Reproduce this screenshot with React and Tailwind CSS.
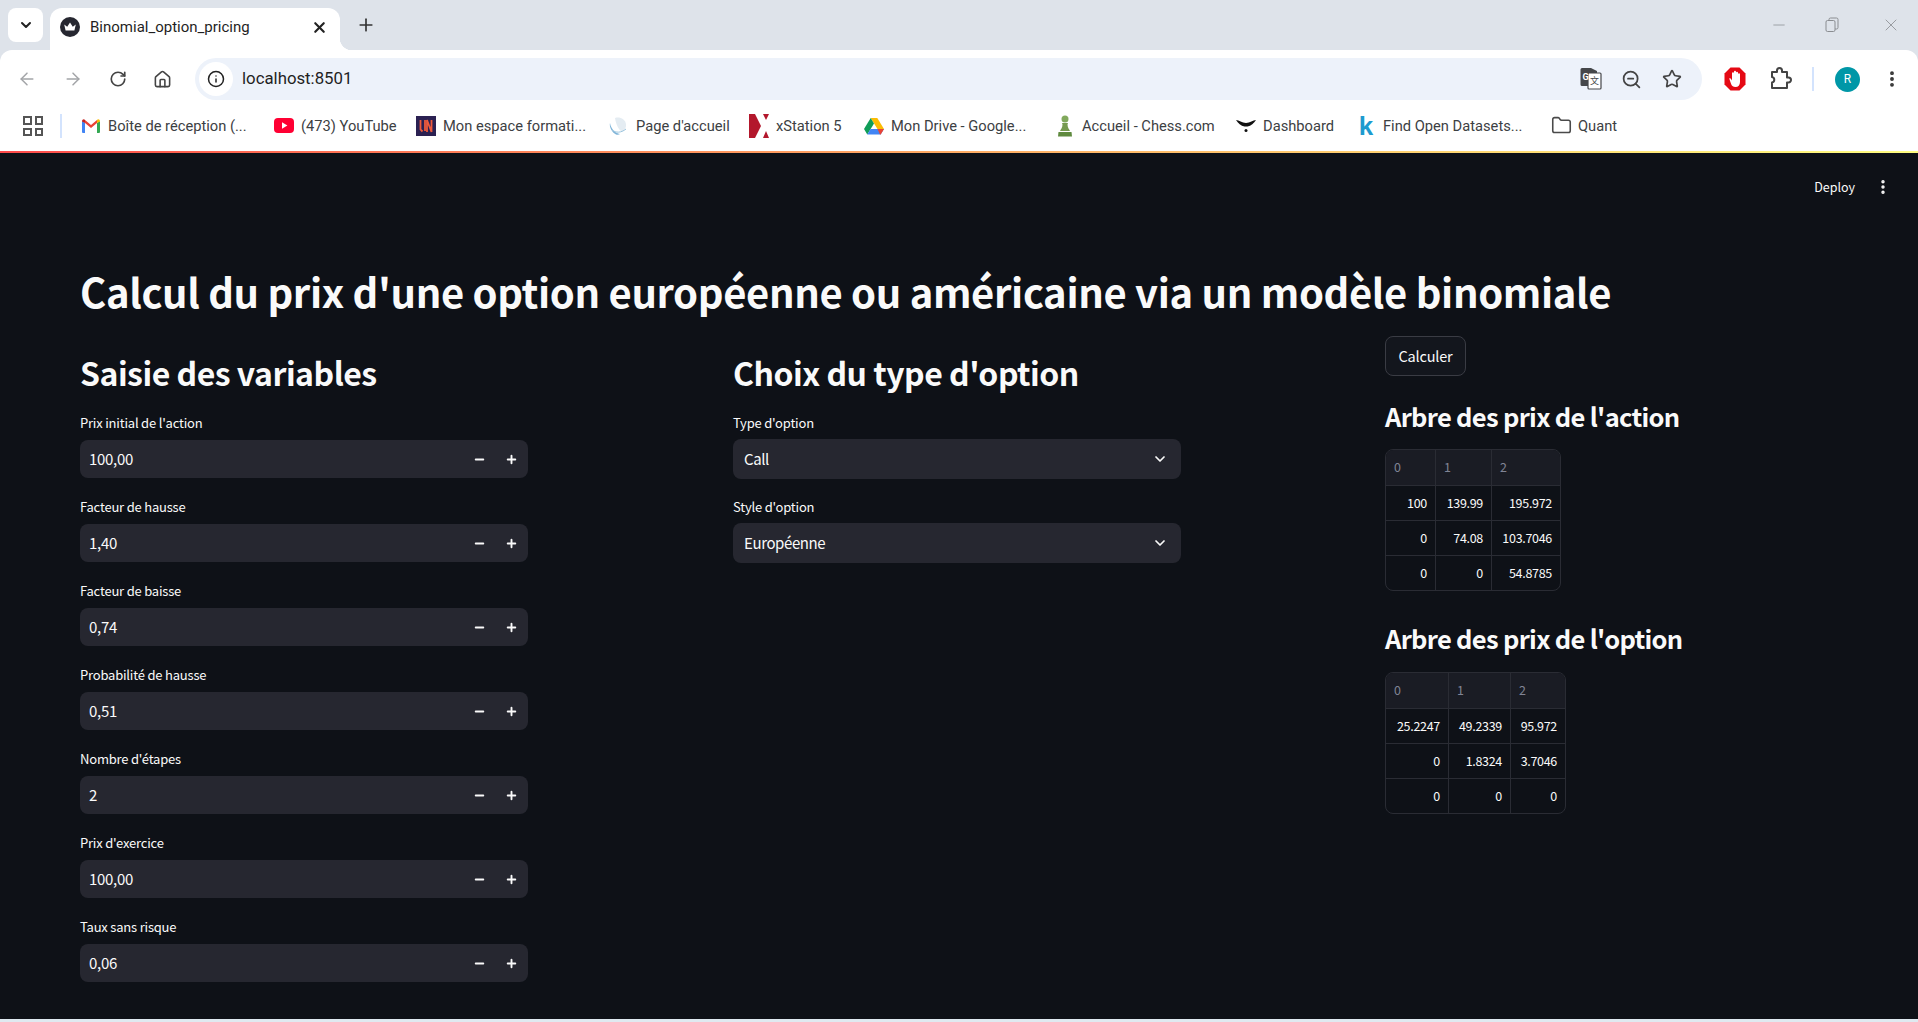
import React from "react";
import { ArrowLeft, ArrowRight, RotateCw, Home, Info, Star, ZoomOut, EllipsisVertical, Folder, ChevronDown, Plus, Minus, X } from "lucide-react";

const ST = "font-['Noto_Sans_CJK_SC','Noto_Sans',sans-serif]";

function Crown() {
  return (
    <svg width="20" height="20" viewBox="0 0 20 20" className="shrink-0">
      <circle cx="10" cy="10" r="10" fill="#262730" />
      <path d="M4.2 7.5 L7.2 9.8 L10 5.6 L12.8 9.8 L15.8 7.5 L14.4 13.6 L5.6 13.6 Z" fill="#fff" />
    </svg>
  );
}
function Gmail() {
  return (
    <svg width="20" height="16" viewBox="0 0 20 16">
      <path d="M1 15V3l3 2v10H2a1 1 0 0 1-1-1z" fill="#4285f4" />
      <path d="M16 15V5l3-2v11a1 1 0 0 1-1 1z" fill="#34a853" />
      <path d="M4 5v-3L10 7l6-5v3l-6 5z" fill="#ea4335" />
      <path d="M1 3.5C1 1.5 3 .7 4 2v3z" fill="#c5221f" />
      <path d="M19 3.5C19 1.5 17 .7 16 2v3z" fill="#fbbc04" />
    </svg>
  );
}
function YouTube() {
  return (
    <svg width="20" height="15" viewBox="0 0 20 15">
      <rect width="20" height="15" rx="4" fill="#ff0033" />
      <path d="M8 4.3 L13.4 7.5 L8 10.7 Z" fill="#fff" />
    </svg>
  );
}
function UN() {
  return (
    <svg width="20" height="20" viewBox="0 0 20 20">
      <rect width="20" height="20" fill="#2b2152" />
      <path d="M4.500 4v9.500l2 2M9 4v11" fill="none" stroke="#ef5a3c" strokeWidth="1.800" />
      <path d="M11 16V4l4.500 12V4" fill="none" stroke="#ef5a3c" strokeWidth="1.800" />
    </svg>
  );
}
function Globe() {
  return (
    <svg width="20" height="20" viewBox="0 0 20 20">
      <path d="M1 7C2 13 6 17 11 18c-1 1-3 1-4 .4C3 16.500 0 11 1 7z" fill="#7fb4d8" />
      <path d="M6 2c5-1.500 10 1 11 6 .5 3-1 6-4 8-3-2-6-7-7-14z" fill="#e4ecf2" />
      <path d="M3 14c4 3 9 3 14-1" fill="none" stroke="#9cc5de" strokeWidth="1" />
    </svg>
  );
}
function XStation() {
  return (
    <svg width="20" height="24" viewBox="0 0 20 24">
      <path d="M0 0 L6 0 L12 12 L6 24 L0 24 Z" fill="#b3172c" />
      <path d="M14 0 L20 0 L17 6 Z M14 24 L20 24 L17 17 Z" fill="#b3172c" />
    </svg>
  );
}
function Drive() {
  return (
    <svg width="20" height="18" viewBox="0 0 20 18">
      <path d="M6.700 1 L13.300 1 L20 12 L13.500 12 Z" fill="#fbbc04" />
      <path d="M6.700 1 L0 12 L3.300 17.500 L10 6.500 Z" fill="#0f9d58" />
      <path d="M6.500 12 L20 12 L16.700 17.500 L3.300 17.500 Z" fill="#4285f4" />
      <path d="M13.500 12 L20 12 L16.700 17.500 L16 17.500 Z" fill="#ea4335" />
    </svg>
  );
}
function Pawn() {
  return (
    <svg width="16" height="22" viewBox="0 0 16 22">
      <circle cx="8" cy="4" r="3.500" fill="#81a95c" />
      <path d="M5 8h6l-.5 1.500c0 3 1.500 4.500 2.500 6.500H3c1-2 2.500-3.500 2.500-6.500z" fill="#769a50" />
      <path d="M1.500 17h13l.5 4.500H1z" fill="#5f8a3e" />
    </svg>
  );
}
function Swoosh() {
  return (
    <svg width="20" height="14" viewBox="0 0 20 14">
      <path d="M0 1c3 0 6 3 10 3s7-3 10-3c-2 3-5 6-8.500 6.500h-3C5 7 2 4 0 1z" fill="#111" />
      <circle cx="10" cy="11.500" r="1.500" fill="#111" />
    </svg>
  );
}
function Translate() {
  return (
    <svg width="22" height="24" viewBox="0 0 22 24">
      <path d="M2 1h9l6 3v15H2a1.500 1.500 0 0 1-1.500-1.500v-15A1.500 1.500 0 0 1 2 1z" fill="#45474a" />
      <rect x="8" y="6" width="13" height="16" rx="1" fill="#fff" stroke="#45474a" strokeWidth="1.200" />
      <text x="2.500" y="13" fontSize="9" fontWeight="700" fill="#fff" fontFamily="Roboto, sans-serif">G</text>
      <text x="10" y="17" fontSize="9" fill="#45474a" fontFamily="'Noto Sans CJK SC', sans-serif">文</text>
    </svg>
  );
}
function Adblock() {
  return (
    <svg width="22" height="24" viewBox="0 0 22 24">
      <polygon points="6.500,0.500 15.500,0.500 21.500,6.500 21.500,17.500 15.500,23.500 6.500,23.500 0.500,17.500 0.500,6.500" fill="#e50914" />
      <path d="M5.200 11.500c.7-.6 1.500-.2 2 .7l.8 1.300V6.200a1 1 0 0 1 2 0V4.700a1 1 0 0 1 2 0v1a1 1 0 0 1 2 0v1.500a1 1 0 0 1 2 0V15c0 3-1.800 5-4.500 5-2.300 0-3.500-1-4.300-2.800z" fill="#fff" />
    </svg>
  );
}
function Extension() {
  return (
    <svg width="22" height="24" viewBox="0 0 22 24" fill="none" stroke="#444" strokeWidth="2" strokeLinejoin="round">
      <path d="M2 5h5V3.500a2.500 2.500 0 0 1 5 0V5h5v5.500h1.500a2.500 2.500 0 0 1 0 5H17V21H2v-5.500a2.800 2.800 0 0 0 0-5.500z" />
    </svg>
  );
}

const bookmarks = [
  { icon: <Gmail />, text: "Boîte de réception (...", cls: "w-[193px]" },
  { icon: <YouTube />, text: "(473) YouTube", cls: "w-[142px]" },
  { icon: <UN />, text: "Mon espace formati...", cls: "w-[193px]" },
  { icon: <Globe />, text: "Page d'accueil", cls: "w-[140px]" },
  { icon: <XStation />, text: "xStation 5", cls: "w-[115px]" },
  { icon: <Drive />, text: "Mon Drive - Google...", cls: "w-[191px]" },
  { icon: <Pawn />, text: "Accueil - Chess.com", cls: "w-[181px]" },
  { icon: <Swoosh />, text: "Dashboard", cls: "w-[120px]" },
  { icon: <span className="font-['Liberation_Sans',sans-serif] text-[26px] leading-none font-bold text-[#1d9bcf]">k</span>, text: "Find Open Datasets...", cls: "w-[195px]" },
  { icon: <Folder size={21} strokeWidth={1.8} className="text-[#4a4a4a]" />, text: "Quant", cls: "w-[80px]" },
];

function Tabs() {
  return (
    <div className="flex h-[50px] shrink-0 bg-[#dee3ea] pt-2">
      <div className="ml-2 flex h-[34px] w-[35px] items-center justify-center rounded-lg bg-white">
        <ChevronDown size={16} strokeWidth={3} className="text-[#222]" />
      </div>
      <div className="relative ml-[7px] flex h-[42px] w-[290px] items-center rounded-t-xl bg-white pl-[10px] pb-[4px]">
        <Crown />
        <span className="ml-[10px] w-[221px] font-['Roboto',sans-serif] text-[15px] text-[#1f1f1f]">Binomial_option_pricing</span>
        <X size={17} strokeWidth={3} className="text-[#222]" />
        <span className="absolute bottom-0 -right-3 h-3 w-3 bg-[radial-gradient(circle_at_100%_0,transparent_12px,white_12.500px)]"></span>
      </div>
      <div className="ml-[16px] flex h-[34px] items-center">
        <Plus size={20} strokeWidth={2} className="text-[#333]" />
      </div>
      <div className="ml-auto flex h-[34px] items-center text-[#8a8d91]">
        <Minus size={18} strokeWidth={1} className="mr-[37px]" />
        <svg width="14" height="16" viewBox="0 0 14 16" className="mr-[42px]" fill="none" stroke="#8a8d91" strokeWidth="1">
          <rect x="1" y="3.500" width="9" height="11" rx="1.500" />
          <path d="M4 3.500V2.500A1.500 1.500 0 0 1 5.500 1h6A1.500 1.500 0 0 1 13 2.500v8a1.500 1.500 0 0 1-1.500 1.500H10" />
        </svg>
        <X size={20} strokeWidth={1} className="mr-[17px]" />
      </div>
    </div>
  );
}

function Toolbar() {
  return (
    <div className="flex h-[58px] shrink-0 items-center">
      <ArrowLeft size={20} strokeWidth={1.8} className="ml-[17px] text-[#a3a5a8]" />
      <ArrowRight size={20} strokeWidth={1.8} className="ml-[26px] text-[#a3a5a8]" />
      <RotateCw size={18} strokeWidth={2.2} className="ml-[26px] text-[#444]" />
      <Home size={19} strokeWidth={2} className="ml-[26px] text-[#444]" />
      <div className="ml-[23px] flex h-[42px] w-[1507px] items-center rounded-full bg-[#edf2fa] pl-1">
        <div className="flex h-[34px] w-[34px] items-center justify-center rounded-full bg-white">
          <Info size={18} strokeWidth={2} className="text-[#222]" />
        </div>
        <span className="ml-[9px] font-['Roboto',sans-serif] text-[16.800px] text-[#1f1f1f]">localhost:8501</span>
        <div className="ml-auto flex items-center">
          <Translate />
          <ZoomOut size={21} strokeWidth={2} className="ml-[19px] text-[#444]" />
          <Star size={20} strokeWidth={2} className="ml-[20px] mr-[20px] text-[#444]" />
        </div>
      </div>
      <div className="ml-[22px]"><Adblock /></div>
      <div className="ml-[24px]"><Extension /></div>
      <div className="ml-[20px] h-[24px] w-[2px] bg-[#d3e3fd]"></div>
      <div className="ml-[21px] flex h-[25px] w-[25px] items-center justify-center rounded-full bg-[#0097a7] font-['Roboto',sans-serif] text-[12px] text-white">R</div>
      <EllipsisVertical size={20} strokeWidth={2.6} className="ml-[22px] text-[#333]" />
    </div>
  );
}

function Bookmarks() {
  return (
    <div className="flex h-[43px] shrink-0 items-center pb-[7px] pl-[23px]">
      <div className="grid h-[20px] w-[20px] grid-cols-2 gap-[3px]">
        <span className="border-2 border-[#555]"></span>
        <span className="border-2 border-[#555]"></span>
        <span className="border-2 border-[#555]"></span>
        <span className="border-2 border-[#555]"></span>
      </div>
      <div className="ml-[17px] mr-[18px] h-[24px] w-[2px] bg-[#d3e3fd]"></div>
      {bookmarks.map((b) => (
        <div key={b.text} className={"flex items-center " + b.cls}>
          <div className="flex w-[22px] shrink-0 items-center justify-center">{b.icon}</div>
          <span className="ml-[6px] whitespace-nowrap font-['Roboto',sans-serif] text-[14.700px] text-[#3c4043]">{b.text}</span>
        </div>
      ))}
    </div>
  );
}

function Label({ children }) {
  return <div className="flex h-[20px] items-center text-[13px] leading-5 tracking-[-0.2px] text-[#fafafa]">{children}</div>;
}

function NumberInput({ label, value }) {
  return (
    <div className="mb-[19px]">
      <Label>{label}</Label>
      <div className="mt-[7px] flex h-[38px] items-center rounded-lg bg-[#262730] pl-[9px] text-[15px] tracking-[-0.3px] text-[#fafafa]">
        <span>{value}</span>
        <Minus size={13} strokeWidth={3.5} className="ml-auto text-[#fafafa]" />
        <Plus size={13} strokeWidth={3.5} className="ml-[19px] mr-[10px] text-[#fafafa]" />
      </div>
    </div>
  );
}

function SelectBox({ label, value }) {
  return (
    <div className="mb-[18px]">
      <Label>{label}</Label>
      <div className="mt-[6px] flex h-[40px] items-center rounded-lg bg-[#262730] pl-[11px] pr-[13px] text-[15px] tracking-[-0.4px] text-[#fafafa]">
        <span>{value}</span>
        <ChevronDown size={16} strokeWidth={2.6} className="ml-auto text-[#fafafa]" />
      </div>
    </div>
  );
}

function DataTable({ widths, rows }) {
  return (
    <div className="w-fit overflow-hidden rounded-lg border border-[#2a2c34] text-[12.500px] leading-none tracking-[-0.3px]">
      <div className="flex h-[35px] bg-[#1a1c24] text-[#808495]">
        {["0", "1", "2"].map((h, i) => (
          <div key={h} className={"flex items-center pl-2 " + widths[i] + (i < 2 ? " border-r border-[#2a2c34]" : "")}>{h}</div>
        ))}
      </div>
      {rows.map((r, ri) => (
        <div key={ri} className="flex h-[35px] border-t border-[#2a2c34] text-[#fafafa]">
          {r.map((c, i) => (
            <div key={i} className={"flex items-center justify-end pr-2 " + widths[i] + (i < 2 ? " border-r border-[#2a2c34]" : "")}>{c}</div>
          ))}
        </div>
      ))}
    </div>
  );
}

export default function App() {
  return (
    <div className="flex h-screen flex-col overflow-hidden bg-[#dee3ea]">
      <Tabs />
      <div className="rounded-t-xl bg-white">
        <Toolbar />
        <Bookmarks />
      </div>
      <div className="h-[2px] shrink-0 bg-gradient-to-r from-[#ff4b4b] to-[#fffd80]"></div>
      <div className={"flex min-h-0 flex-1 flex-col bg-[#0e1117] " + ST}>
        <div className="flex h-[70px] shrink-0 items-start justify-end pt-[22px] pr-[26px] text-[12.500px] leading-6 text-[#fafafa]">
          <span>Deploy</span>
          <EllipsisVertical size={18} strokeWidth={2.6} className="ml-[19px] mt-[3px] text-[#fafafa]" />
        </div>
        <div className="px-20">
          <h1 className="mt-[38px] h-[60px] whitespace-nowrap text-[40px] leading-[60px] font-bold tracking-[-0.36px] text-[#fafafa]">Calcul du prix d'une option européenne ou américaine via un modèle binomiale</h1>
          <div className="mt-[15px] flex">
            <div className="mr-[205px] w-[448px]">
              <h2 className="mt-[11px] h-[50px] text-[32px] leading-[50px] font-semibold tracking-[-0.5px] text-[#fafafa]">Saisie des variables</h2>
              <div className="mt-[16px]">
                <NumberInput label="Prix initial de l'action" value="100,00" />
                <NumberInput label="Facteur de hausse" value="1,40" />
                <NumberInput label="Facteur de baisse" value="0,74" />
                <NumberInput label="Probabilité de hausse" value="0,51" />
                <NumberInput label="Nombre d'étapes" value="2" />
                <NumberInput label="Prix d'exercice" value="100,00" />
                <NumberInput label="Taux sans risque" value="0,06" />
              </div>
            </div>
            <div className="mr-[204px] w-[448px]">
              <h2 className="mt-[11px] h-[50px] text-[32px] leading-[50px] font-semibold tracking-[-0.5px] text-[#fafafa]">Choix du type d'option</h2>
              <div className="mt-[16px]">
                <SelectBox label="Type d'option" value="Call" />
                <SelectBox label="Style d'option" value="Européenne" />
              </div>
            </div>
            <div className="w-[453px]">
              <div className="flex h-[40px] w-[81px] items-center justify-center rounded-lg border border-[#3a3c44] bg-[#13161d] pb-px text-[14.500px] tracking-[-0.2px] text-[#fafafa]">Calculer</div>
              <h3 className="mt-[20px] h-[40px] text-[25.500px] leading-[40px] font-semibold tracking-[-0.7px] text-[#fafafa]">Arbre des prix de l'action</h3>
              <div className="mt-[13px]">
                <DataTable
                  widths={["w-[50px]", "w-[56px]", "w-[68px]"]}
                  rows={[["100", "139.99", "195.972"], ["0", "74.08", "103.7046"], ["0", "0", "54.8785"]]}
                />
              </div>
              <h3 className="mt-[27px] h-[40px] text-[25.500px] leading-[40px] font-semibold tracking-[-0.7px] text-[#fafafa]">Arbre des prix de l'option</h3>
              <div className="mt-[14px]">
                <DataTable
                  widths={["w-[63px]", "w-[62px]", "w-[54px]"]}
                  rows={[["25.2247", "49.2339", "95.972"], ["0", "1.8324", "3.7046"], ["0", "0", "0"]]}
                />
              </div>
            </div>
          </div>
        </div>
      </div>
      <div className="h-[3px] shrink-0 bg-[#dfe9f0]"></div>
    </div>
  );
}
